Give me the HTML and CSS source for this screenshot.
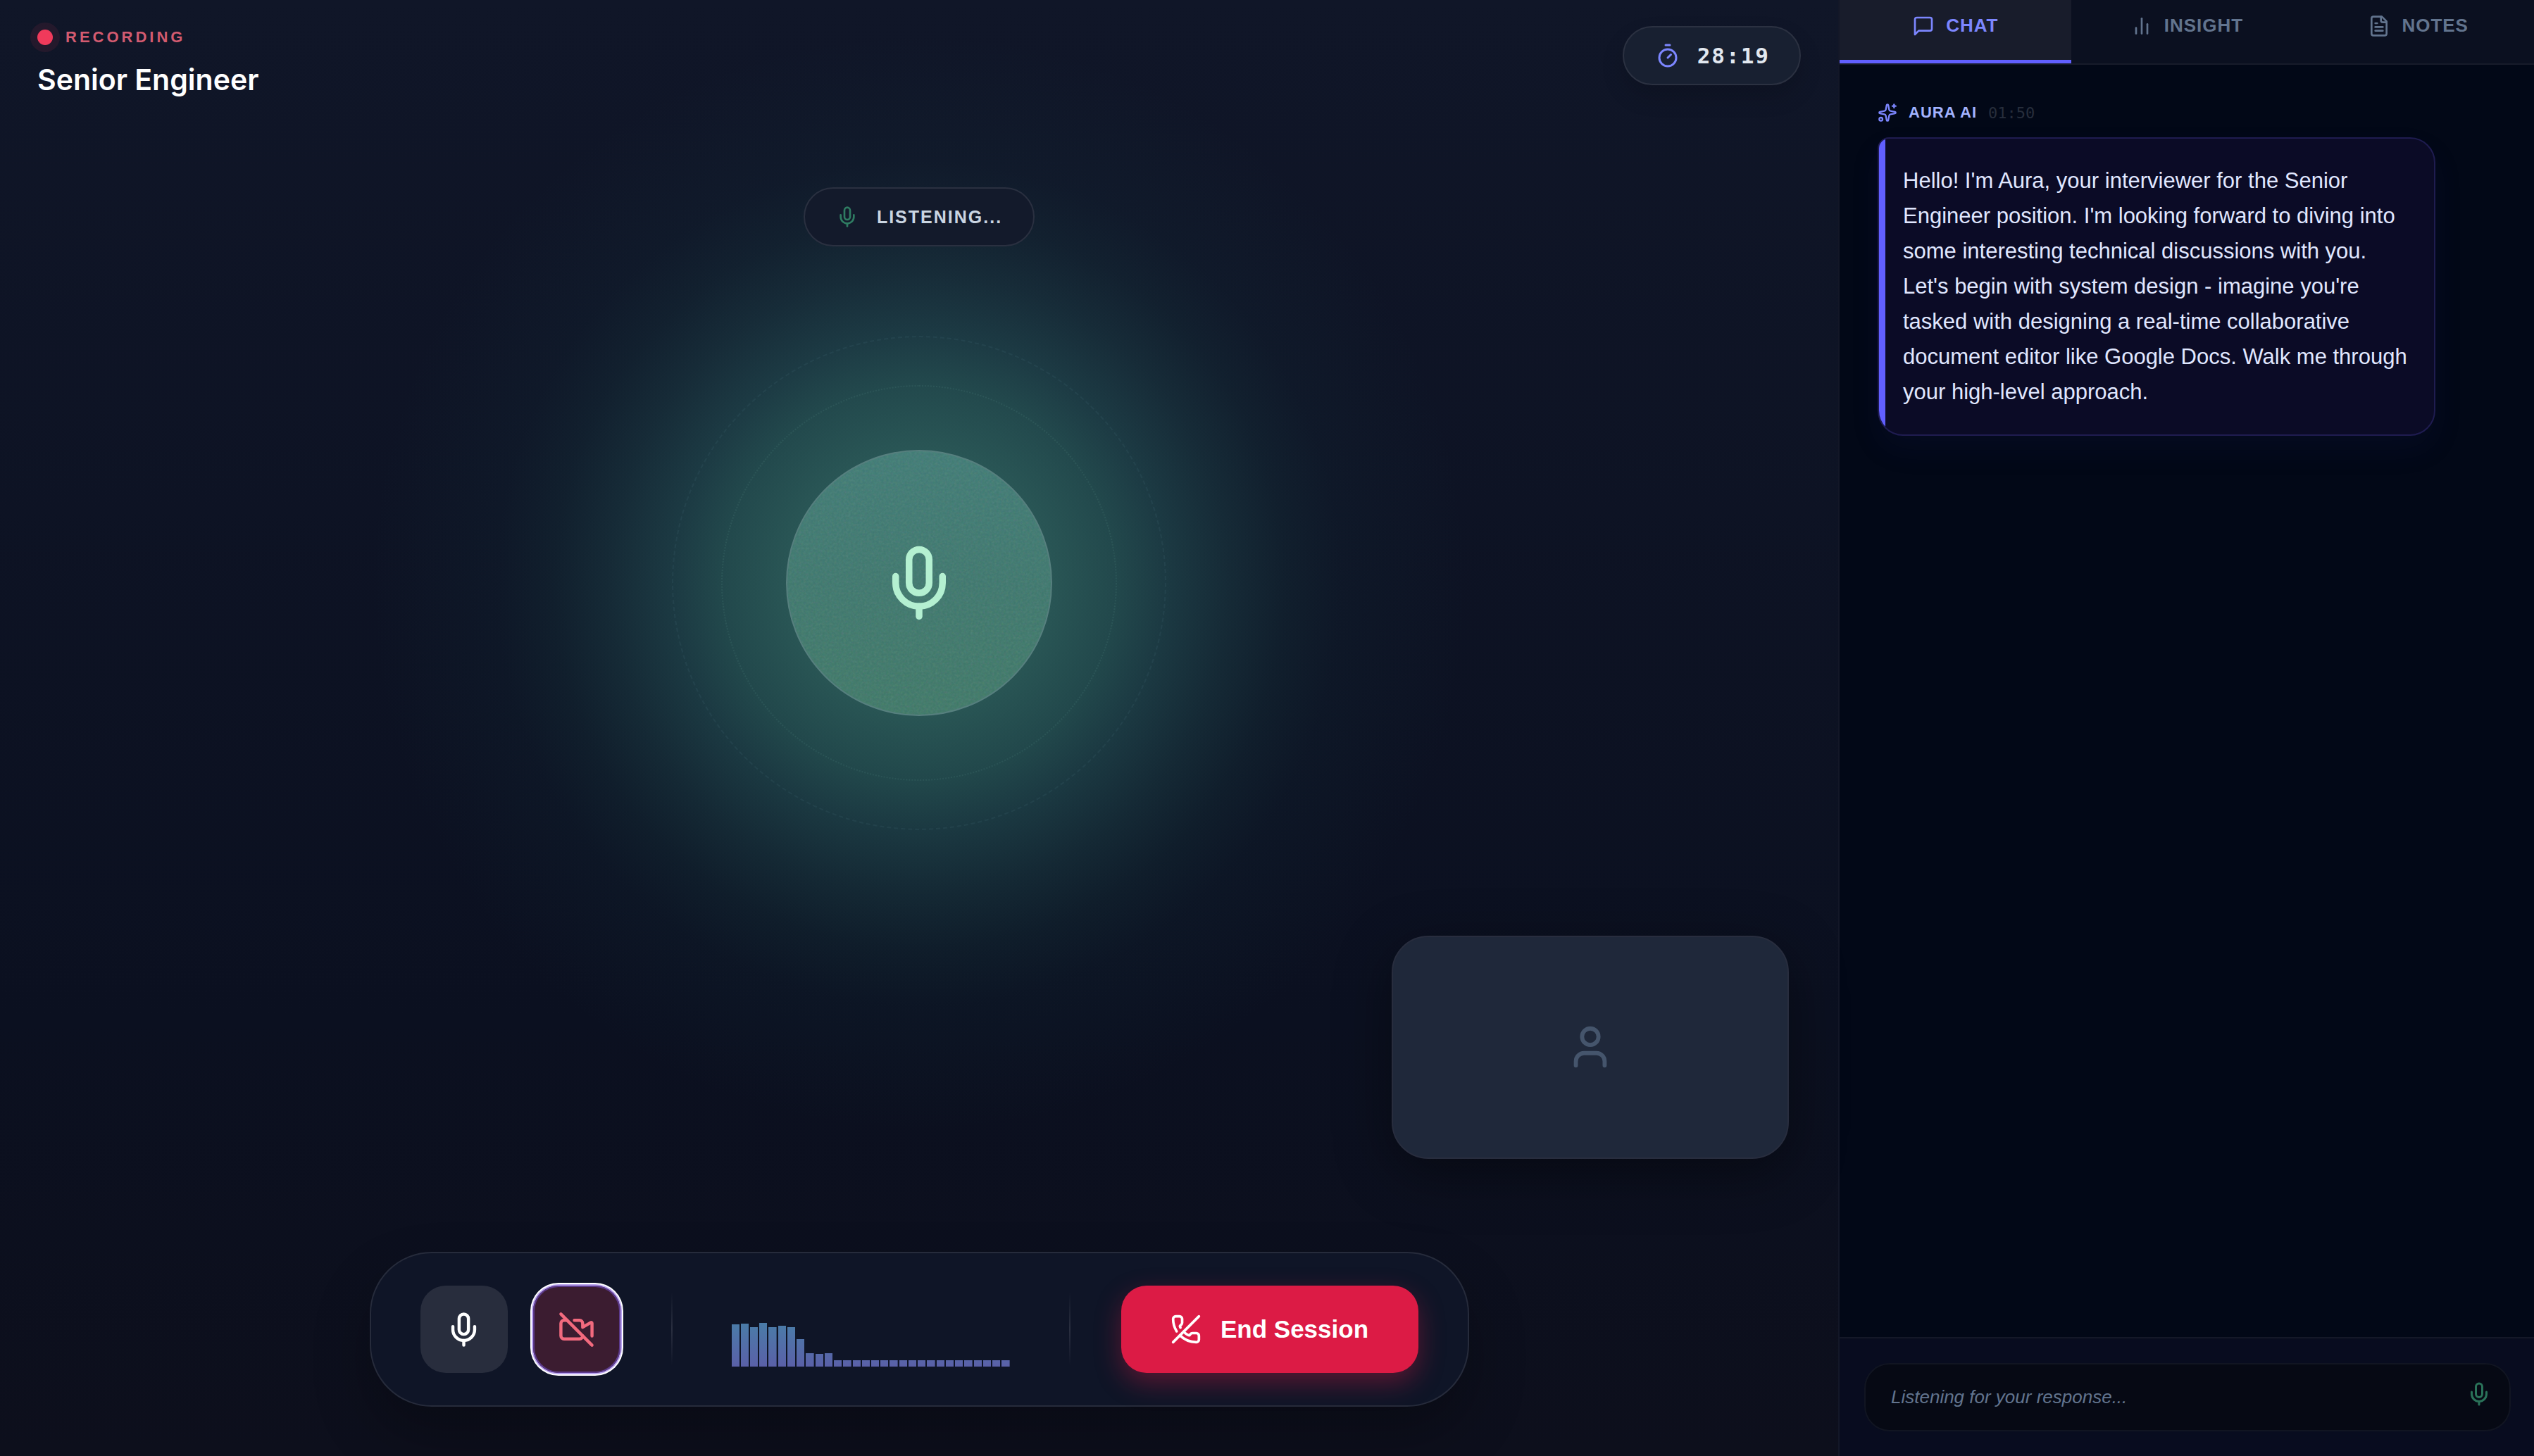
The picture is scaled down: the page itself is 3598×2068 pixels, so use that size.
FILE: index.html
```
<!DOCTYPE html>
<html lang="en">
<head>
<meta charset="utf-8">
<meta name="viewport" content="width=device-width, initial-scale=1">
<title>Senior Engineer – Interview</title>
<link rel="stylesheet" href="styles.css">
</head>
<body>
<svg class="sprite" aria-hidden="true">
  <symbol id="mic" viewBox="0 0 24 24"><path d="M12 19v3"/><path d="M19 10v2a7 7 0 0 1-14 0v-2"/><rect x="9" y="2" width="6" height="13" rx="3"/></symbol>
</svg>
<div class="app">
  <main class="stage">
    <header class="topbar">
      <div class="heading">
        <div class="recording"><span class="rec-dot"></span>RECORDING</div>
        <h1 class="title">Senior Engineer</h1>
      </div>
      <div class="timer">
        <svg class="icon icon-timer" viewBox="0 0 24 24"><path d="M10 2h4"/><path d="m12 14 3-3"/><circle cx="12" cy="14" r="8"/></svg>
        <span>28:19</span>
      </div>
    </header>

    <div class="status">
      <svg class="icon icon-status"><use href="#mic"/></svg>
      <span>LISTENING...</span>
    </div>

    <div class="orb">
      <span class="ring ring-dotted"></span>
      <span class="ring ring-dashed"></span>
      <svg class="grain" aria-hidden="true">
        <filter id="noise"><feTurbulence type="fractalNoise" baseFrequency="0.3" numOctaves="3" stitchTiles="stitch"/></filter>
        <rect width="100%" height="100%" filter="url(#noise)"/>
      </svg>
      <svg class="icon icon-orb"><use href="#mic"/></svg>
    </div>

    <div class="self-view">
      <svg class="icon icon-user" viewBox="0 0 24 24"><path d="M19 21v-2a4 4 0 0 0-4-4H9a4 4 0 0 0-4 4v2"/><circle cx="12" cy="7" r="4"/></svg>
    </div>

    <div class="controls">
      <div class="toggles">
        <button class="toggle" type="button" aria-label="Mute microphone"><svg class="icon icon-control"><use href="#mic"/></svg></button>
        <button class="toggle toggle-off" type="button" aria-label="Turn camera on"><svg class="icon icon-control" viewBox="0 0 24 24"><path d="M10.66 6H14a2 2 0 0 1 2 2v2.5l5.248-3.062A.5.5 0 0 1 22 7.87v8.196"/><path d="M16 16a2 2 0 0 1-2 2H4a2 2 0 0 1-2-2V8a2 2 0 0 1 2-2h2"/><path d="m2 2 20 20"/></svg></button>
      </div>
      <span class="divider"></span>
      <div class="levels">
        <i style="height:60px"></i><i style="height:61px"></i><i style="height:56px"></i><i style="height:62px"></i><i style="height:56px"></i><i style="height:58px"></i><i style="height:56px"></i><i style="height:39px"></i><i style="height:19px"></i><i style="height:18px"></i><i style="height:19px"></i><i style="height:9px"></i><i style="height:9px"></i><i style="height:9px"></i><i style="height:9px"></i><i style="height:9px"></i><i style="height:9px"></i><i style="height:9px"></i><i style="height:9px"></i><i style="height:9px"></i><i style="height:9px"></i><i style="height:9px"></i><i style="height:9px"></i><i style="height:9px"></i><i style="height:9px"></i><i style="height:9px"></i><i style="height:9px"></i><i style="height:9px"></i><i style="height:9px"></i><i style="height:9px"></i>
      </div>
      <span class="divider"></span>
      <button class="end" type="button">
        <svg class="icon icon-end" viewBox="0 0 24 24"><path d="M10.1 13.9a14 14 0 0 0 3.732 2.668 1 1 0 0 0 1.213-.303l.355-.465A2 2 0 0 1 17 15h3a2 2 0 0 1 2 2v3a2 2 0 0 1-2 2 18 18 0 0 1-12.728-5.272"/><path d="M22 2 2 22"/><path d="M4.76 13.582A18 18 0 0 1 2 4a2 2 0 0 1 2-2h3a2 2 0 0 1 2 2v3a2 2 0 0 1-.8 1.6l-.468.351a1 1 0 0 0-.292 1.233 14 14 0 0 0 .244.473"/></svg>
        End Session
      </button>
    </div>
  </main>

  <aside class="panel">
    <nav class="tabs">
      <button class="tab tab-active" type="button"><svg class="icon icon-tab" viewBox="0 0 24 24"><path d="M21 15a2 2 0 0 1-2 2H7l-4 4V5a2 2 0 0 1 2-2h14a2 2 0 0 1 2 2z"/></svg>CHAT</button>
      <button class="tab" type="button"><svg class="icon icon-tab" viewBox="0 0 24 24"><path d="M18 20V10"/><path d="M12 20V4"/><path d="M6 20v-6"/></svg>INSIGHT</button>
      <button class="tab" type="button"><svg class="icon icon-tab" viewBox="0 0 24 24"><path d="M15 2H6a2 2 0 0 0-2 2v16a2 2 0 0 0 2 2h12a2 2 0 0 0 2-2V7Z"/><path d="M14 2v4a2 2 0 0 0 2 2h4"/><path d="M10 9H8"/><path d="M16 13H8"/><path d="M16 17H8"/></svg>NOTES</button>
    </nav>
    <section class="messages">
      <article class="message">
        <div class="meta">
          <svg class="icon icon-spark" viewBox="0 0 24 24"><path d="M11.017 2.814a1 1 0 0 1 1.966 0l1.051 5.558a2 2 0 0 0 1.594 1.594l5.558 1.051a1 1 0 0 1 0 1.966l-5.558 1.051a2 2 0 0 0-1.594 1.594l-1.051 5.558a1 1 0 0 1-1.966 0l-1.051-5.558a2 2 0 0 0-1.594-1.594l-5.558-1.051a1 1 0 0 1 0-1.966l5.558-1.051a2 2 0 0 0 1.594-1.594z"/><path d="M20 2v4"/><path d="M22 4h-4"/><circle cx="4" cy="20" r="2"/></svg>
          <span class="author">AURA AI</span>
          <time class="time">01:50</time>
        </div>
        <p class="bubble">Hello! I'm Aura, your interviewer for the Senior Engineer position. I'm looking forward to diving into some interesting technical discussions with you. Let's begin with system design - imagine you're tasked with designing a real-time collaborative document editor like Google Docs. Walk me through your high-level approach.</p>
      </article>
    </section>
    <footer class="composer">
      <div class="field">
        <input class="reply" type="text" aria-label="Your response" placeholder="Listening for your response...">
        <svg class="icon icon-reply"><use href="#mic"/></svg>
      </div>
    </footer>
  </aside>
</div>
</body>
</html>
```
FILE: styles.css
```
*, *::before, *::after { box-sizing: border-box; }

body {
  margin: 0;
  background: #020617;
  color: #fff;
  font-family: "Liberation Sans", Arial, sans-serif;
}

button, input { font: inherit; color: inherit; margin: 0; }
button { border: 0; padding: 0; cursor: pointer; }

.sprite { position: absolute; width: 0; height: 0; }

.icon {
  flex: none;
  fill: none;
  stroke: currentColor;
  stroke-width: 2;
  stroke-linecap: round;
  stroke-linejoin: round;
}
.icon-timer { width: 36px; height: 36px; color: #7c86ff; }
.icon-status { width: 32px; height: 32px; color: #2f7c62; }
.icon-orb { width: 114px; height: 114px; color: #b4f0d1; position: relative; }
.icon-user { width: 70px; height: 70px; color: #45556c; }
.icon-control { width: 53px; height: 53px; }
.icon-end { width: 44px; height: 44px; }
.icon-tab { width: 32px; height: 32px; }
.icon-spark { width: 28px; height: 28px; color: #7c86ff; }
.icon-reply { width: 36px; height: 36px; color: #2a7259; margin-bottom: 10px; }

.app {
  display: grid;
  grid-template-columns: minmax(0, 1fr) 988px;
  min-height: 100vh;
}

/* Stage */
.stage {
  position: relative;
  display: flex;
  flex-direction: column;
  align-items: center;
  padding: 37px 53px 70px;
  background:
    radial-gradient(circle at 50% 828px,
      rgba(72, 160, 140, .47) 190px,
      rgba(68, 160, 142, .38) 280px,
      rgba(64, 154, 144, .29) 350px,
      rgba(60, 150, 140, .18) 440px,
      rgba(50, 140, 130, .1) 520px,
      rgba(40, 120, 120, .05) 600px,
      rgba(40, 100, 120, 0) 780px),
    linear-gradient(#101628, #0b1020 70%, #0d0f1c);
}

.topbar {
  align-self: stretch;
  display: flex;
  justify-content: space-between;
  align-items: flex-start;
}
.heading { display: flex; flex-direction: column; gap: 16px; }
.recording {
  display: flex;
  align-items: center;
  gap: 18px;
  font-size: 22px;
  font-weight: 700;
  line-height: 32px;
  letter-spacing: 4px;
  color: #d35b70;
}
.rec-dot {
  width: 22px;
  height: 22px;
  border-radius: 50%;
  background: #f03a5b;
  box-shadow: 0 0 0 10px rgba(240, 58, 91, .09);
}
.title {
  margin: 0;
  font-family: Inter, "Liberation Sans", sans-serif;
  font-size: 41px;
  font-weight: 600;
  line-height: 56px;
}
.timer {
  display: flex;
  align-items: center;
  gap: 24px;
  height: 84px;
  padding: 0 42px 0 44px;
  border: 2px solid #2b3141;
  border-radius: 42px;
  background: #182031;
  box-shadow: 0 16px 32px rgba(0, 0, 0, .15);
  font-family: "DejaVu Sans Mono", monospace;
  font-size: 31px;
  font-weight: 700;
  letter-spacing: 2px;
  color: #e2e8f0;
}

.status {
  display: flex;
  align-items: center;
  gap: 26px;
  height: 84px;
  margin-top: 125px;
  padding: 0 44px;
  border: 2px solid #2a3040;
  border-radius: 42px;
  background: #131a2b;
  font-size: 25px;
  font-weight: 700;
  letter-spacing: 2px;
  color: #cad5e2;
}

.orb {
  position: relative;
  display: grid;
  place-items: center;
  width: 378px;
  height: 378px;
  margin-top: 289px;
  border: 2px solid #567f7e;
  border-radius: 50%;
  background: linear-gradient(#3f7b75, #3d776d 50%, #3e7867);
}
.ring {
  position: absolute;
  top: 50%;
  left: 50%;
  transform: translate(-50%, -50%);
  border-radius: 50%;
}
.ring-dotted { width: 562px; height: 562px; border: 2px dotted rgba(130, 190, 180, .1); }
.ring-dashed { width: 702px; height: 702px; border: 2px dashed rgba(130, 180, 190, .07); }
.grain {
  position: absolute;
  inset: 0;
  width: 100%;
  height: 100%;
  border-radius: 50%;
  opacity: .13;
}

.self-view {
  position: absolute;
  right: 70px;
  bottom: 422px;
  display: grid;
  place-items: center;
  width: 564px;
  aspect-ratio: 16 / 9;
  border: 2px solid #282d3e;
  border-radius: 52px;
  background: #1f283a;
  box-shadow: 0 20px 80px rgba(0, 0, 0, .4);
}

.controls {
  display: flex;
  align-items: center;
  gap: 72px;
  height: 220px;
  margin-top: auto;
  padding: 0 70px;
  border: 2px solid #262b3b;
  border-radius: 88px;
  background: #0f1527;
  box-shadow: 0 40px 80px rgba(0, 0, 0, .25);
}
.toggles { display: flex; gap: 36px; }
.toggle {
  display: grid;
  place-items: center;
  width: 124px;
  height: 124px;
  border-radius: 36px;
  background: #282d3d;
  color: #fff;
}
.toggle-off {
  background: #3b1c30;
  color: #f26a7e;
  box-shadow:
    inset 0 0 0 2px #5c3a8c,
    0 0 0 2px #b9a3f0,
    0 0 0 4px #fff;
}
.divider {
  width: 2px;
  height: 104px;
  background: linear-gradient(transparent, #2a2f40, transparent);
}
.levels {
  display: flex;
  align-items: flex-end;
  gap: 2px;
  width: 419px;
  height: 106px;
  padding: 0 12px;
}
.levels i {
  flex: 1;
  background: linear-gradient(#4a7ca8, #5a60a8) bottom / 100% 62px;
}
.end {
  display: flex;
  align-items: center;
  justify-content: center;
  gap: 27px;
  width: 422px;
  height: 124px;
  border-radius: 36px;
  background: #dc1b45;
  box-shadow: 0 14px 36px rgba(220, 27, 69, .36);
  font-size: 35px;
  font-weight: 700;
  color: #fff;
}

/* Side panel */
.panel {
  display: flex;
  flex-direction: column;
  border-left: 2px solid #131727;
  background: #020817;
}
.tabs {
  display: flex;
  border-bottom: 2px solid #171b2a;
  background: #0b1020;
}
.tab {
  flex: 1;
  display: flex;
  align-items: center;
  justify-content: center;
  gap: 16px;
  height: 90px;
  padding-bottom: 12px;
  border-bottom: 5px solid transparent;
  background: none;
  font-size: 26px;
  font-weight: 700;
  letter-spacing: 1px;
  color: #62748e;
}
.tab-active {
  border-color: #615fff;
  background: #181c2b;
  color: #7c86ff;
}

.messages { flex: 1; padding: 52px 54px; }
.meta {
  display: flex;
  align-items: center;
  gap: 16px;
  height: 32px;
  margin-bottom: 19px;
  font-size: 22px;
}
.author { font-weight: 700; letter-spacing: 1px; color: #a3b3ff; }
.time { font-family: "DejaVu Sans Mono", monospace; color: #272e3c; }
.bubble {
  position: relative;
  overflow: hidden;
  width: 792px;
  margin: 0;
  padding: 35px 34px;
  border: 2px solid #1f1c50;
  border-radius: 16px 36px 36px 36px;
  background: #0b0b26;
  box-shadow: 0 20px 40px rgba(40, 40, 120, .1);
  font-size: 31px;
  line-height: 50px;
  color: #e0e7ff;
}
.bubble::before {
  content: "";
  position: absolute;
  inset: 0 auto 0 0;
  width: 9px;
  background: #615fff;
}

.composer {
  padding: 35px 33px 35px 35px;
  border-top: 2px solid #141828;
  background: #080c1f;
}
.field {
  display: flex;
  align-items: center;
  height: 97px;
  padding: 0 25px 0 36px;
  border: 2px solid #111522;
  border-radius: 36px;
  background: #060914;
}
.reply {
  flex: 1;
  height: 93px;
  padding: 0;
  border: 0;
  outline: 0;
  background: none;
  font-size: 26px;
  font-style: italic;
}
.reply::placeholder { color: #62748e; opacity: 1; }
```
